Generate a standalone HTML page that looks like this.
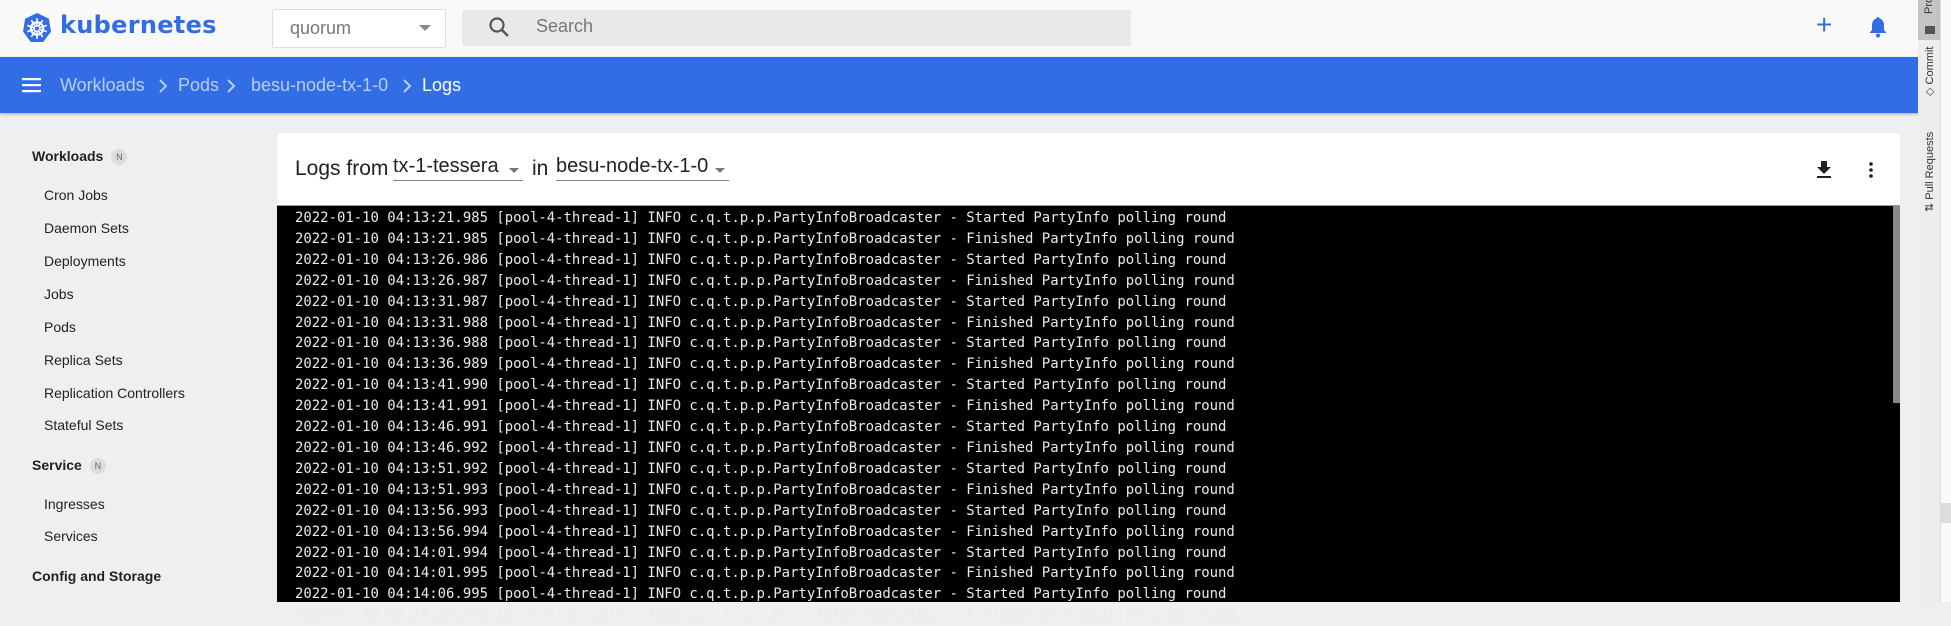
<!DOCTYPE html>
<html><head><meta charset="utf-8"><style>
*{margin:0;padding:0;box-sizing:border-box}
body{width:1951px;height:602px;overflow:hidden;background:#eeeff1;font-family:"Liberation Sans",Roboto,sans-serif;position:relative}
.top{position:absolute;left:0;top:0;width:1920px;height:57px;background:#f9f9f9}
.blue{position:absolute;left:0;top:57px;width:1920px;height:56px;background:#326de6;box-shadow:0 1px 3px rgba(0,0,0,.3)}
.abs{position:absolute;white-space:nowrap}
.side{position:absolute;left:0;top:113px;width:223px}
.sh{position:absolute;left:32px;font-size:14px;font-weight:bold;color:#222;white-space:nowrap}
.si{position:absolute;left:44px;font-size:14px;color:#222;white-space:nowrap}
.badge{display:inline-block;width:16px;height:16px;border-radius:8px;background:#ddd;color:#666;font-size:9px;text-align:center;line-height:16px;margin-left:8px;vertical-align:1px;font-weight:normal}
.card{position:absolute;left:277px;top:133px;width:1623px;height:469px;background:#fff;border-radius:4px 4px 0 0}
.log{position:absolute;left:277px;top:205px;width:1623px;height:397px;background:#000;border-top:1px solid #999}
.log pre{position:absolute;left:18px;top:2px;font-family:"DejaVu Sans Mono","Liberation Mono",monospace;font-size:13.95px;line-height:20.9px;color:#eaeaea}
.bc{position:absolute;top:75px;font-size:18px;color:#b9cdf5;white-space:nowrap}
</style></head><body>
<div class="top"></div>
<svg class="abs" style="left:22px;top:12px" width="30" height="31" viewBox="0 0 27 30"><polygon points="13.5,1 25,6.5 27,19 19.5,29 7.5,29 0,19 2,6.5" fill="#326de6"/><circle cx="13.5" cy="16" r="6" fill="none" stroke="#fff" stroke-width="2"/><g stroke="#fff" stroke-width="1.6"><line x1="13.5" y1="6" x2="13.5" y2="26"/><line x1="4" y1="13" x2="23" y2="19"/><line x1="23" y1="13" x2="4" y2="19"/><line x1="8" y1="24" x2="19" y2="8"/><line x1="19" y1="24" x2="8" y2="8"/></g><circle cx="13.5" cy="16" r="2" fill="#326de6"/></svg>
<div class="abs" style="left:60px;top:11px;font-size:24px;font-weight:bold;color:#326de6;font-family:'DejaVu Sans',sans-serif;letter-spacing:0.3px">kubernetes</div>
<div class="abs" style="left:272px;top:9px;width:174px;height:39px;border:1px solid #ddd;border-radius:2px;background:#fff"></div>
<div class="abs" style="left:290px;top:18px;font-size:18px;color:#777">quorum</div>
<div class="abs" style="left:419px;top:25px;border:6px solid transparent;border-top-color:#888;border-bottom:0"></div>
<div class="abs" style="left:462px;top:10px;width:669px;height:36px;background:#e8e9eb;border-radius:2px"></div>
<svg class="abs" style="left:487px;top:15px" width="24" height="24" viewBox="0 0 24 24"><circle cx="10" cy="10" r="6.5" fill="none" stroke="#555" stroke-width="2.2"/><line x1="15" y1="15" x2="21" y2="21" stroke="#555" stroke-width="2.4"/></svg>
<div class="abs" style="left:536px;top:16px;font-size:18px;color:#777">Search</div>
<div class="abs" style="left:1816px;top:11px;font-size:28px;color:#326de6;line-height:28px">+</div>
<svg class="abs" style="left:1869px;top:16px" width="18" height="22" viewBox="0 0 18 22"><path d="M9 1c1 0 1.5.7 1.5 1.5C13.5 3.3 15 6 15 9v5l2.5 3H.5L3 14V9c0-3 1.5-5.7 4.5-6.5C7.5 1.7 8 1 9 1z" fill="#326de6"/><circle cx="9" cy="19.5" r="2" fill="#326de6"/></svg>
<div class="blue"></div>
<svg class="abs" style="left:22px;top:78px" width="19" height="15"><rect y="0" width="19" height="2.2" fill="#fff"/><rect y="6" width="19" height="2.2" fill="#fff"/><rect y="12" width="19" height="2.2" fill="#fff"/></svg>
<div class="bc" style="left:60px">Workloads</div>
<svg class="abs" style="left:158px;top:79px" width="10" height="14"><path d="M2 1l6 6-6 6" fill="none" stroke="#b9cdf5" stroke-width="2"/></svg>
<div class="bc" style="left:178px">Pods</div>
<svg class="abs" style="left:226px;top:79px" width="10" height="14"><path d="M2 1l6 6-6 6" fill="none" stroke="#b9cdf5" stroke-width="2"/></svg>
<div class="bc" style="left:251px">besu-node-tx-1-0</div>
<svg class="abs" style="left:402px;top:79px" width="10" height="14"><path d="M2 1l6 6-6 6" fill="none" stroke="#b9cdf5" stroke-width="2"/></svg>
<div class="bc" style="left:422px;color:#fff">Logs</div>
<div class="side">
<div class="sh" style="top:35px">Workloads<span class="badge">N</span></div>
<div class="si" style="top:74px">Cron Jobs</div>
<div class="si" style="top:107px">Daemon Sets</div>
<div class="si" style="top:140px">Deployments</div>
<div class="si" style="top:173px">Jobs</div>
<div class="si" style="top:206px">Pods</div>
<div class="si" style="top:239px">Replica Sets</div>
<div class="si" style="top:272px">Replication Controllers</div>
<div class="si" style="top:304px">Stateful Sets</div>
<div class="sh" style="top:344px">Service<span class="badge">N</span></div>
<div class="si" style="top:383px">Ingresses</div>
<div class="si" style="top:415px">Services</div>
<div class="sh" style="top:455px">Config and Storage</div>
</div>
<div class="card"></div>
<div class="abs" style="left:295px;top:157px;font-size:21px;color:#222">Logs from</div>
<div class="abs" style="left:393px;top:155px;width:130px;height:26px;border-bottom:1px solid #888;font-size:20px;color:#222">tx-1-tessera</div>
<div class="abs" style="left:509px;top:168px;border:5px solid transparent;border-top-color:#777;border-bottom:0"></div>
<div class="abs" style="left:532px;top:157px;font-size:21px;color:#222">in</div>
<div class="abs" style="left:556px;top:155px;width:173px;height:26px;border-bottom:1px solid #888;font-size:20px;color:#222">besu-node-tx-1-0</div>
<div class="abs" style="left:715px;top:168px;border:5px solid transparent;border-top-color:#777;border-bottom:0"></div>
<svg class="abs" style="left:1816px;top:160px" width="16" height="20" viewBox="0 0 16 20"><path d="M5 1h6v6h4L8 14 1 7h4z" fill="#222"/><rect x="1" y="16" width="14" height="2" fill="#222"/></svg>
<svg class="abs" style="left:1868px;top:161px" width="6" height="18"><circle cx="3" cy="3" r="1.8" fill="#222"/><circle cx="3" cy="9" r="1.8" fill="#222"/><circle cx="3" cy="15" r="1.8" fill="#222"/></svg>
<div class="log"><pre>2022-01-10 04:13:21.985 [pool-4-thread-1] INFO c.q.t.p.p.PartyInfoBroadcaster - Started PartyInfo polling round
2022-01-10 04:13:21.985 [pool-4-thread-1] INFO c.q.t.p.p.PartyInfoBroadcaster - Finished PartyInfo polling round
2022-01-10 04:13:26.986 [pool-4-thread-1] INFO c.q.t.p.p.PartyInfoBroadcaster - Started PartyInfo polling round
2022-01-10 04:13:26.987 [pool-4-thread-1] INFO c.q.t.p.p.PartyInfoBroadcaster - Finished PartyInfo polling round
2022-01-10 04:13:31.987 [pool-4-thread-1] INFO c.q.t.p.p.PartyInfoBroadcaster - Started PartyInfo polling round
2022-01-10 04:13:31.988 [pool-4-thread-1] INFO c.q.t.p.p.PartyInfoBroadcaster - Finished PartyInfo polling round
2022-01-10 04:13:36.988 [pool-4-thread-1] INFO c.q.t.p.p.PartyInfoBroadcaster - Started PartyInfo polling round
2022-01-10 04:13:36.989 [pool-4-thread-1] INFO c.q.t.p.p.PartyInfoBroadcaster - Finished PartyInfo polling round
2022-01-10 04:13:41.990 [pool-4-thread-1] INFO c.q.t.p.p.PartyInfoBroadcaster - Started PartyInfo polling round
2022-01-10 04:13:41.991 [pool-4-thread-1] INFO c.q.t.p.p.PartyInfoBroadcaster - Finished PartyInfo polling round
2022-01-10 04:13:46.991 [pool-4-thread-1] INFO c.q.t.p.p.PartyInfoBroadcaster - Started PartyInfo polling round
2022-01-10 04:13:46.992 [pool-4-thread-1] INFO c.q.t.p.p.PartyInfoBroadcaster - Finished PartyInfo polling round
2022-01-10 04:13:51.992 [pool-4-thread-1] INFO c.q.t.p.p.PartyInfoBroadcaster - Started PartyInfo polling round
2022-01-10 04:13:51.993 [pool-4-thread-1] INFO c.q.t.p.p.PartyInfoBroadcaster - Finished PartyInfo polling round
2022-01-10 04:13:56.993 [pool-4-thread-1] INFO c.q.t.p.p.PartyInfoBroadcaster - Started PartyInfo polling round
2022-01-10 04:13:56.994 [pool-4-thread-1] INFO c.q.t.p.p.PartyInfoBroadcaster - Finished PartyInfo polling round
2022-01-10 04:14:01.994 [pool-4-thread-1] INFO c.q.t.p.p.PartyInfoBroadcaster - Started PartyInfo polling round
2022-01-10 04:14:01.995 [pool-4-thread-1] INFO c.q.t.p.p.PartyInfoBroadcaster - Finished PartyInfo polling round
2022-01-10 04:14:06.995 [pool-4-thread-1] INFO c.q.t.p.p.PartyInfoBroadcaster - Started PartyInfo polling round
2022-01-10 04:14:06.996 [pool-4-thread-1] INFO c.q.t.p.p.PartyInfoBroadcaster - Finished PartyInfo polling round</pre>
<div class="abs" style="left:1616px;top:0;width:7px;height:197px;background:#888"></div></div>
<div class="abs" style="left:1918px;top:0;width:22px;height:602px;background:#ededed"></div>
<div class="abs" style="left:1918px;top:0;width:22px;height:40px;background:#c4c4c4"></div>
<div class="abs" style="left:1940px;top:0;width:11px;height:602px;background:#fafafa;border-left:1px solid #ddd"></div>
<div class="abs" style="left:1940px;top:503px;width:11px;height:20px;background:#ddd"></div>
<div class="abs" style="left:1925px;top:26px;width:10px;height:8px;background:#555"></div>
<div class="abs" style="transform:rotate(-90deg);transform-origin:0 0;font-size:11px;color:#333;top:14px;left:1923px">Pro</div>
<div class="abs" style="transform:rotate(-90deg);transform-origin:0 0;font-size:11px;color:#333;top:96px;left:1923px">◇ Commit</div>
<div class="abs" style="transform:rotate(-90deg);transform-origin:0 0;font-size:11px;color:#333;top:212px;left:1923px">⇅ Pull Requests</div>
</body></html>
